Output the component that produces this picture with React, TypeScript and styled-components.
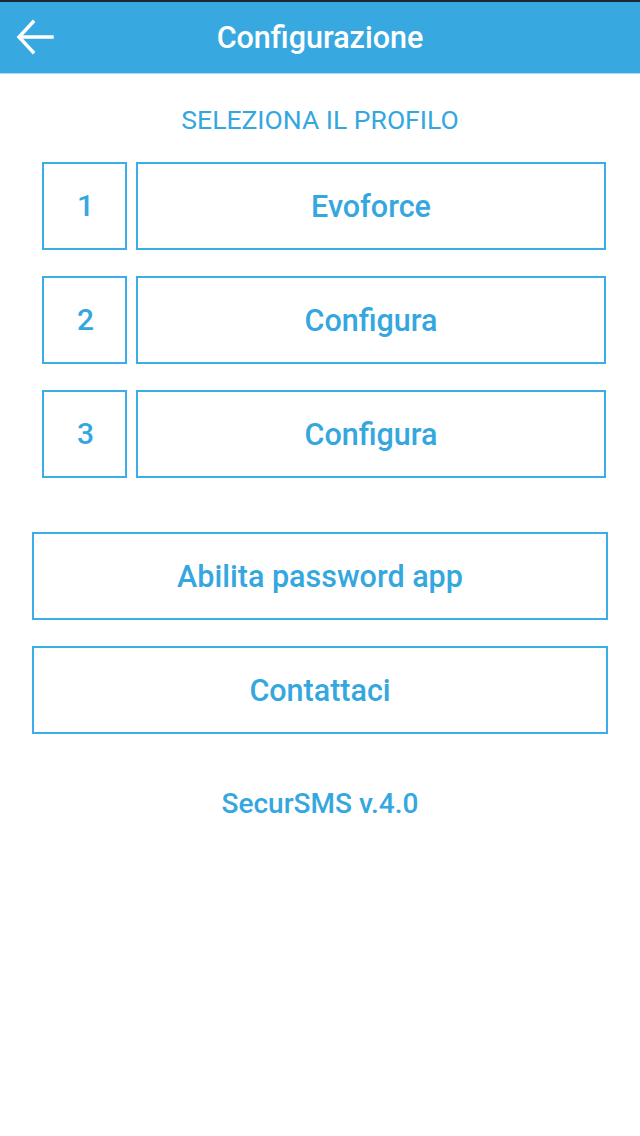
import React from "react";
import styled, { createGlobalStyle } from "styled-components";

const Global = createGlobalStyle`
  html, body { margin: 0; padding: 0; background: #ffffff; }
  body { font-family: Roboto, "Noto Sans", sans-serif; }
  * { box-sizing: border-box; }
`;

const Page = styled.div`
  width: 640px;
  min-height: 1136px;
  background: #ffffff;
  display: flex;
  flex-direction: column;
`;

const Header = styled.header`
  height: 74px;
  background: #38a9e0;
  border-top: 2px solid #1d2a34;
  border-bottom: 1px solid #a9daf2;
  display: grid;
  grid-template-columns: 72px 1fr 72px;
  align-items: center;
`;

const BackButton = styled.button`
  border: none;
  background: transparent;
  padding: 0 0 0 14px;
  height: 100%;
  display: flex;
  align-items: center;
  cursor: pointer;
`;

const Title = styled.h1`
  margin: 0;
  text-align: center;
  color: #ffffff;
  font-family: Roboto, sans-serif;
  font-weight: 500;
  font-size: 30.5px;
  line-height: 36px;
`;

const Content = styled.main`
  display: flex;
  flex-direction: column;
  align-items: center;
`;

const Subtitle = styled.div`
  margin-top: 31px;
  color: #35a7df;
  font-family: Roboto, sans-serif;
  font-weight: 400;
  font-size: 26.5px;
  line-height: 30px;
`;

const ProfileList = styled.div`
  margin-top: 27px;
  margin-left: 8px;
  display: flex;
  flex-direction: column;
  gap: 26px;
  width: 564px;
`;

const ProfileRow = styled.div`
  display: grid;
  grid-template-columns: 85px 1fr;
  gap: 9px;
  height: 88px;
`;

const OutlineBox = styled.button`
  border: 2px solid #3aaee8;
  background: #ffffff;
  color: #35a7df;
  font-family: Roboto, sans-serif;
  font-weight: 500;
  font-size: 30.5px;
  display: flex;
  align-items: center;
  justify-content: center;
  padding: 0;
  cursor: pointer;
`;

const NumberBox = styled(OutlineBox)`
  font-size: 30px;
  padding-left: 2px;
  padding-bottom: 1px;
`;

const ActionList = styled.div`
  margin-top: 54px;
  display: flex;
  flex-direction: column;
  gap: 26px;
  width: 576px;
`;

const ActionButton = styled(OutlineBox)`
  height: 88px;
  width: 100%;
`;

const Version = styled.div`
  margin-top: 54px;
  color: #35a7df;
  font-family: Roboto, sans-serif;
  font-weight: 500;
  font-size: 28px;
  line-height: 32px;
`;

const profiles = [
  { n: "1", label: "Evoforce" },
  { n: "2", label: "Configura" },
  { n: "3", label: "Configura" },
];

export default function App() {
  return (
    <>
      <Global />
      <Page>
        <Header>
          <BackButton aria-label="Indietro">
            <svg width="40" height="40" viewBox="0 0 40 40">
              <path
                d="M38 19 H6 M19 4 L5 19 L19 34"
                stroke="#ffffff"
                strokeWidth="3.4"
                fill="none"
                strokeLinecap="square"
              />
            </svg>
          </BackButton>
          <Title>Configurazione</Title>
          <div />
        </Header>
        <Content>
          <Subtitle>SELEZIONA IL PROFILO</Subtitle>
          <ProfileList>
            {profiles.map((p) => (
              <ProfileRow key={p.n}>
                <NumberBox>{p.n}</NumberBox>
                <OutlineBox>{p.label}</OutlineBox>
              </ProfileRow>
            ))}
          </ProfileList>
          <ActionList>
            <ActionButton>Abilita password app</ActionButton>
            <ActionButton>Contattaci</ActionButton>
          </ActionList>
          <Version>SecurSMS v.4.0</Version>
        </Content>
      </Page>
    </>
  );
}
